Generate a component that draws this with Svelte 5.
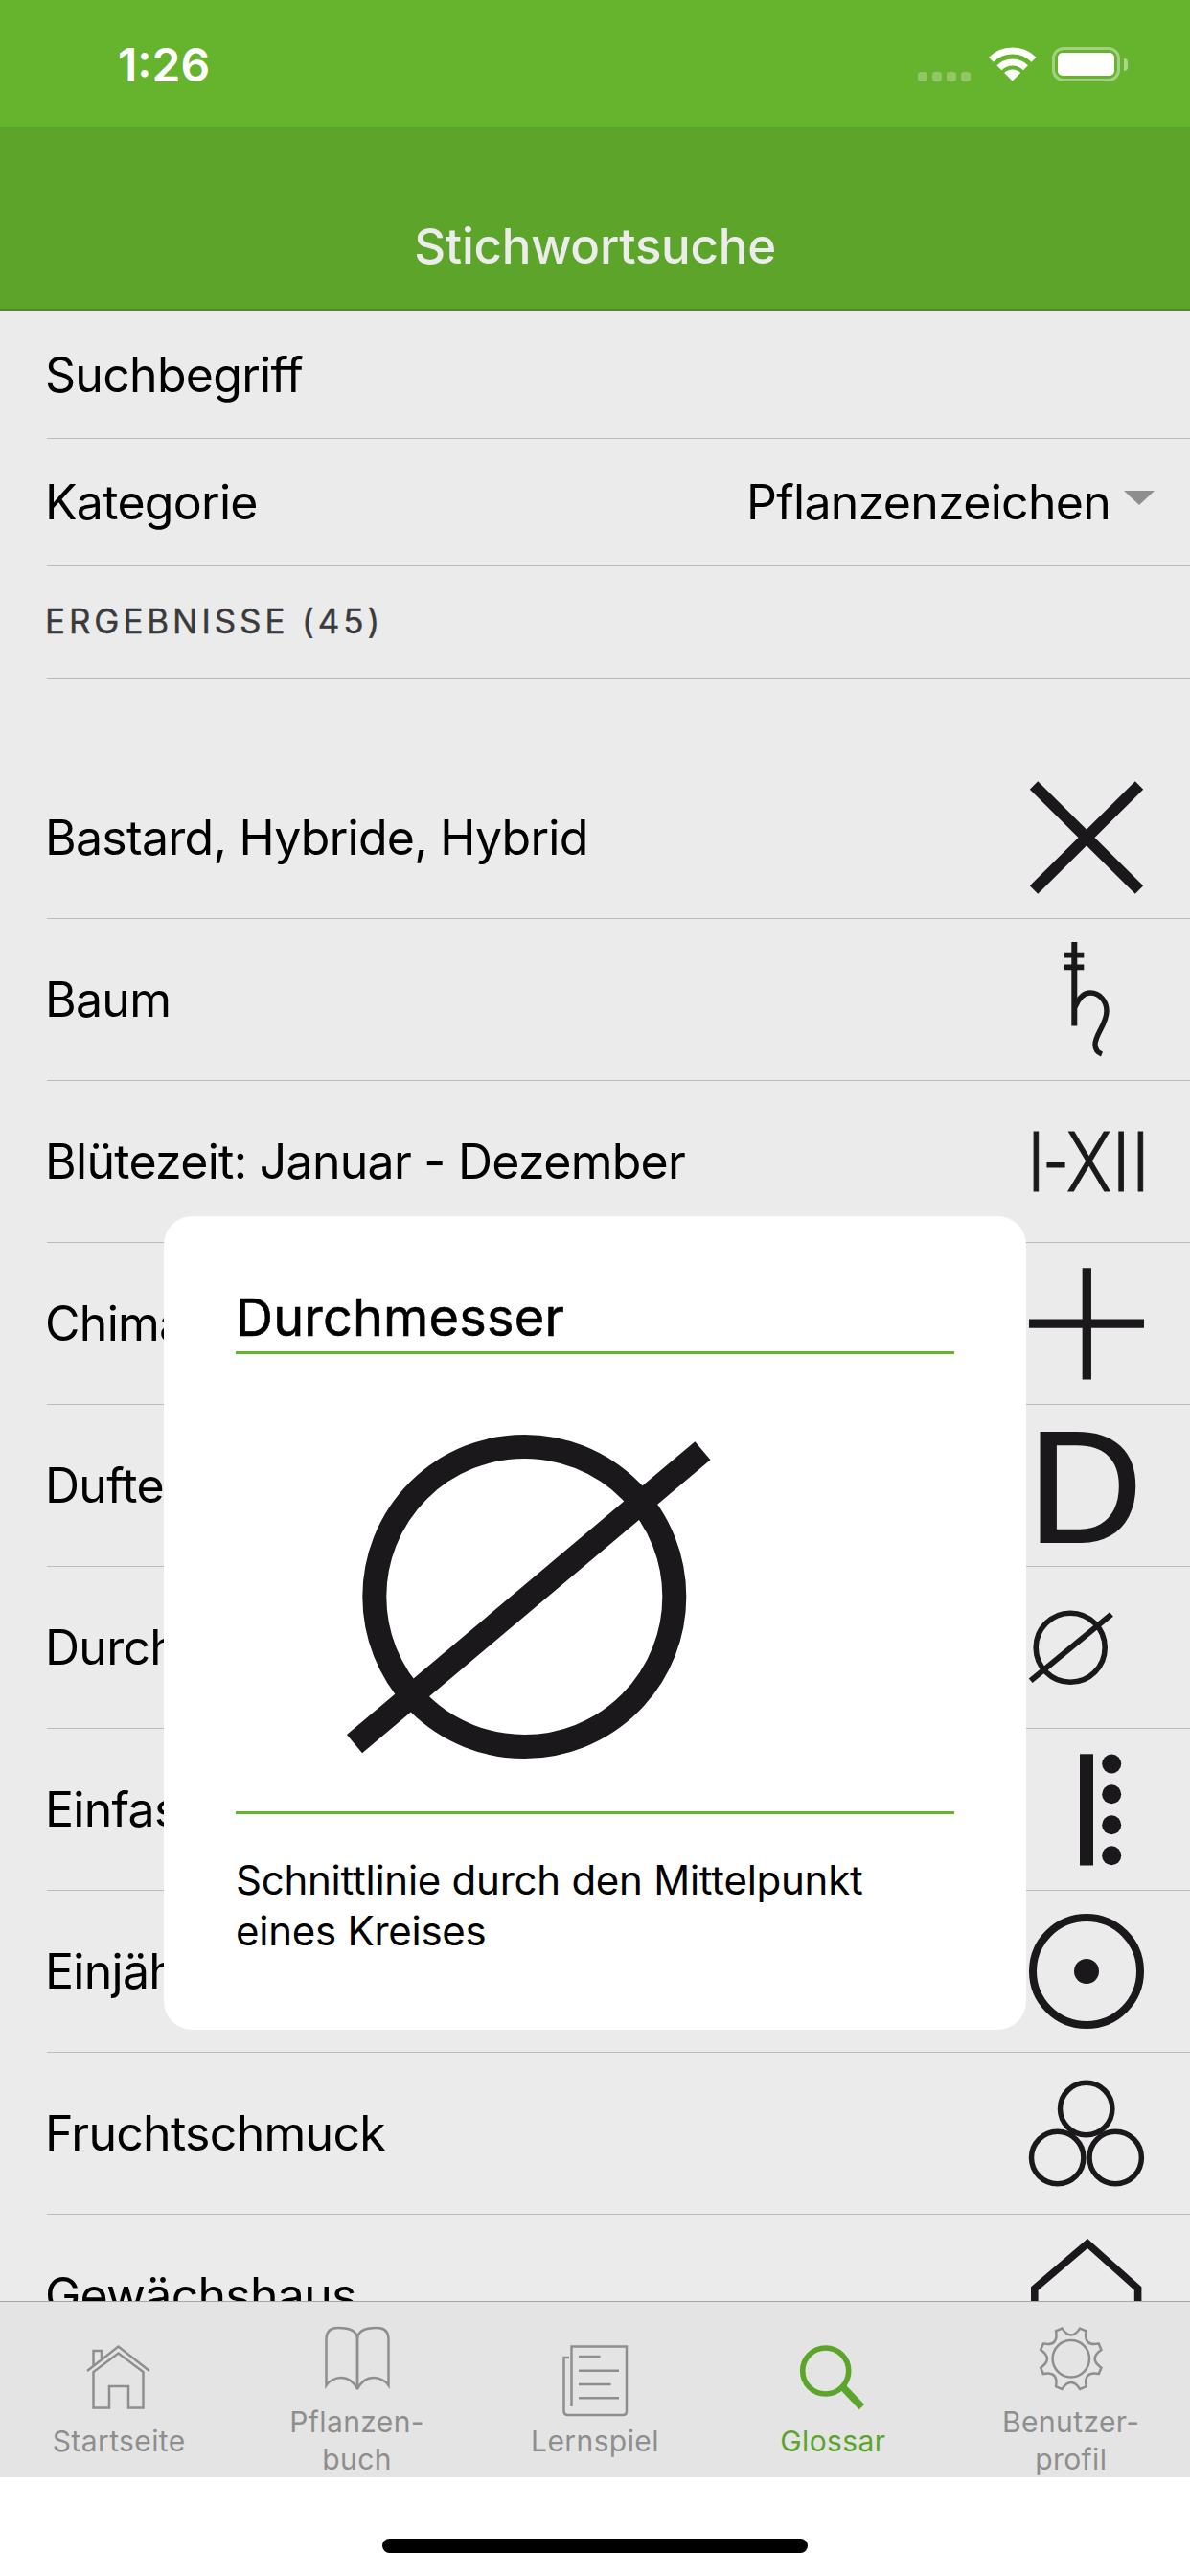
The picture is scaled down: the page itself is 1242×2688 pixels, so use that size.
<script>
  const rows = [
    { label: 'Bastard, Hybride, Hybrid', icon: 'cross' },
    { label: 'Baum', icon: 'tree' },
    { label: 'Blütezeit: Januar - Dezember', icon: 'months' },
    { label: 'Chimaere, Pfropfbastard', icon: 'plus' },
    { label: 'Duftende Pflanze', icon: 'd' },
    { label: 'Durchmesser', icon: 'dia' },
    { label: 'Einfassungspflanze', icon: 'edge' },
    { label: 'Einjährige Pflanze', icon: 'annual' },
    { label: 'Fruchtschmuck', icon: 'fruit' },
    { label: 'Gewächshaus', icon: 'house' }
  ];

  const cx = 33.8, cy = 34.3;
  const pt = (deg, r) => {
    const a = (deg * Math.PI) / 180;
    return `${(cx + r * Math.sin(a)).toFixed(2)} ${(cy - r * Math.cos(a)).toFixed(2)}`;
  };
  let gear = '';
  for (let i = 0; i < 8; i++) {
    const a = 22.5 + 45 * i;
    gear += `${i === 0 ? 'M' : 'L'}${pt(a - 6, 33)} L${pt(a + 6, 33)} Q${pt(a + 22.5, 18)} ${pt(a + 39, 33)} `;
  }
  gear += 'Z';
</script>

<div class="page">
  <div class="status">
    <span class="time">1:26</span>
    <div class="status-right">
      <div class="dots"><i></i><i></i><i></i><i></i></div>
      <svg class="wifi" width="50" height="36" viewBox="0 0 50 36" fill="none" stroke="#fff" stroke-width="7">
        <path d="M2.4 13.2A31.5 31.5 0 0 1 47 13.2" />
        <path d="M10.9 21.7A19.5 19.5 0 0 1 38.5 21.7" />
        <path d="M24.7 35.5L16.2 27A12 12 0 0 1 33.2 27Z" fill="#fff" stroke="none" />
      </svg>
      <div class="battery"><b></b></div>
      <div class="nub"></div>
    </div>
  </div>

  <header class="nav">Stichwortsuche</header>

  <div class="field first"><span>Suchbegriff</span></div>
  <div class="field second">
    <span>Kategorie</span>
    <div class="select"><span>Pflanzenzeichen</span><i class="caret"></i></div>
  </div>
  <div class="field results"><span>ERGEBNISSE (45)</span></div>

  <main class="list">
    {#each rows as row}
      <div class="row">
        <span>{row.label}</span>
        <svg class="sym" width="120" height="120" viewBox="0 0 120 120" fill="none" stroke="#1a181b">
          {#if row.icon === 'cross'}
            <path stroke-width="12" d="M5 5.5L115 114.5M115 5.5L5 114.5" />
          {:else if row.icon === 'tree'}
            <path stroke-width="6" d="M47.3 0V87.5" />
            <path stroke-width="5.8" d="M37 13.6H57.3M37 26.4H57.3" />
            <path stroke-width="5.4" d="M48 68C52 58 58 53 64 53C74 53 81 62 81 72C81 86 69 96 69 107C69 112 71 115 76 117" />
          {:else if row.icon === 'months'}
            <text class="roman" x="-3" y="91" textLength="129" lengthAdjust="spacingAndGlyphs" fill="#1a181b" stroke="#1a181b" stroke-width="1">I-XII</text>
          {:else if row.icon === 'plus'}
            <path stroke-width="9.3" d="M60.3 2.2V118.5M0 60.2H120" />
          {:else if row.icon === 'd'}
            <text class="dee" x="-1" y="119" fill="#1a181b" stroke="#1a181b" stroke-width="2">D</text>
          {:else if row.icon === 'dia'}
            <circle cx="43.2" cy="60.2" r="36" stroke-width="5.6" />
            <path stroke-width="6" d="M1.7 94.8L86 25.5" />
          {:else if row.icon === 'edge'}
            <g fill="#1a181b" stroke="none">
              <rect x="53" y="2.3" width="14" height="116.2" />
              <circle cx="86.2" cy="12.5" r="10" />
              <circle cx="86.2" cy="44.2" r="10" />
              <circle cx="86.2" cy="76.3" r="10" />
              <circle cx="86.2" cy="108.3" r="10" />
            </g>
          {:else if row.icon === 'annual'}
            <circle cx="60" cy="60" r="56" stroke-width="8" />
            <circle cx="60" cy="60" r="13" fill="#1a181b" stroke="none" />
          {:else if row.icon === 'fruit'}
            <g stroke-width="5.5">
              <circle cx="59.7" cy="34.5" r="27.2" />
              <circle cx="29.7" cy="85.5" r="27.2" />
              <circle cx="90.2" cy="85.5" r="27.2" />
            </g>
          {:else if row.icon === 'house'}
            <path stroke-width="7.6" d="M5.8 130V53L61 6L113.6 53V130" />
          {/if}
        </svg>
      </div>
    {/each}
  </main>

  <nav class="tabs">
    <div class="tab">
      <svg width="68" height="68" viewBox="0 0 68 68" fill="none" stroke="#8e8e8e" stroke-width="2.5">
        <path d="M1 27L33.5 1.5L66 27" />
        <path d="M7.5 65.5V28L33.5 8.5L59.5 28V65.5H44V43H24V65.5Z" />
        <path d="M7.5 21V6H16V14" />
      </svg>
      <span>Startseite</span>
    </div>
    <div class="tab">
      <svg width="68" height="68" viewBox="0 0 68 68" fill="none" stroke="#8e8e8e" stroke-width="2.5">
        <path d="M1.5 62V14C1.5 5 7 2 14 2C24 2 34 4 34 14V66C30 58 24 54 17 54C10 54 4 58 1.5 62Z" />
        <path d="M66.5 62V14C66.5 5 61 2 54 2C44 2 34 4 34 14V66C38 58 44 54 51 54C58 54 64 58 66.5 62Z" />
      </svg>
      <span>Pflanzen-<br />buch</span>
    </div>
    <div class="tab">
      <svg width="68" height="68" viewBox="0 0 68 74" fill="none" stroke="#8e8e8e" stroke-width="2.5" preserveAspectRatio="xMidYMin slice">
        <path d="M7 13H1.5V69Q1.5 73 6 73H63Q67 73 67 69V1.5H9.5V64" />
        <path d="M17 12H39.5M17 26.7H59M17 41H50.6M17 55.3H59" />
      </svg>
      <span>Lernspiel</span>
    </div>
    <div class="tab active">
      <svg width="68" height="68" viewBox="0 0 68 68" fill="none" stroke="#5ca42a">
        <circle cx="26.7" cy="27" r="24" stroke-width="5.6" />
        <path stroke-width="7.5" d="M45.4 44.7L64.4 64.7" />
      </svg>
      <span>Glossar</span>
    </div>
    <div class="tab">
      <svg width="68" height="68" viewBox="0 0 68 68" fill="none" stroke="#8e8e8e" stroke-width="2.5">
        <path d={gear} />
        <circle cx="33.8" cy="34.3" r="19.2" />
      </svg>
      <span>Benutzer-<br />profil</span>
    </div>
  </nav>

  <div class="home"><i></i></div>

  <section class="modal">
    <h2>Durchmesser</h2>
    <svg class="figure" width="750" height="477" viewBox="0 0 750 477" fill="none" stroke="#1a181b" stroke-width="25">
      <circle cx="301.3" cy="253" r="156.5" />
      <path d="M124 406.6L487.4 100.7" />
    </svg>
    <p>Schnittlinie durch den Mittelpunkt<br />eines Kreises</p>
  </section>
</div>

<style>
  :global(body) { margin: 0; background: #fff; }
  .page {
    position: relative;
    width: 1242px;
    height: 2688px;
    overflow: hidden;
    display: flex;
    flex-direction: column;
    background: #ebebeb;
    color: #000;
    font-family: Inter, "Liberation Sans", sans-serif;
  }
  .status {
    height: 132px;
    flex: none;
    box-sizing: border-box;
    background: #66b32e;
    color: #fff;
    display: flex;
    align-items: flex-start;
    justify-content: space-between;
    padding: 49px 65px 0 123px;
  }
  .time { font-size: 48px; font-weight: 600; line-height: 38px; }
  .status-right { display: flex; align-items: flex-start; }
  .dots { display: flex; gap: 5px; margin: 26px 19px 0 0; }
  .dots i { width: 10px; height: 10px; border-radius: 3px; background: rgba(255,255,255,.28); }
  .wifi { margin-right: 16px; }
  .battery {
    width: 71px; height: 36px; box-sizing: border-box;
    border: 3px solid rgba(255,255,255,.4);
    border-radius: 12px;
    padding: 3px;
  }
  .battery b { display: block; height: 100%; background: #fff; border-radius: 5px; }
  .nub { width: 4px; height: 13px; margin: 12px 0 0 4px; border-radius: 0 4px 4px 0; background: rgba(255,255,255,.45); }
  .nav {
    height: 192px;
    flex: none;
    box-sizing: border-box;
    background: #5ca42a;
    border-bottom: 2px solid #4f8a2a;
    color: #ececec;
    font-size: 51px;
    font-weight: 500;
    letter-spacing: -0.25px;
    text-align: center;
    padding-top: 95px;
    line-height: 60px;
  }
  .field {
    flex: none;
    box-sizing: border-box;
    margin-left: 49px;
    border-bottom: 1px solid #bcbcbc;
    display: flex;
    align-items: center;
    justify-content: space-between;
    font-size: 50px;
    letter-spacing: -0.72px;
    padding-right: 37px;
  }
  .field > span:first-child, .row > span { margin-left: -2px; }
  .first { height: 134px; }
  .second { height: 133px; }
  .select { display: flex; align-items: center; gap: 14px; }
  .caret {
    width: 0; height: 0;
    border-left: 16px solid transparent;
    border-right: 16px solid transparent;
    border-top: 15px solid #8e8e8e;
    margin-top: -10px;
  }
  .results {
    height: 118px;
    font-size: 35px;
    font-weight: 400;
    -webkit-text-stroke: 0.4px #3a3a3c;
    letter-spacing: 3.9px;
    color: #3a3a3c;
    padding-bottom: 3px;
  }
  .list {
    flex: 1;
    min-height: 0;
    overflow: hidden;
    padding-top: 81px;
  }
  .row {
    height: 169px;
    box-sizing: border-box;
    margin-left: 49px;
    padding-right: 48px;
    border-bottom: 1px solid #bcbcbc;
    display: flex;
    align-items: center;
    justify-content: space-between;
    font-size: 50px;
    letter-spacing: -0.72px;
  }
  .sym { flex: none; overflow: visible; }
  .roman { font-family: Roboto, sans-serif; font-weight: 300; font-size: 87px; }
  .dee { font-family: "Liberation Sans", sans-serif; font-size: 165px; }
  .tabs {
    flex: none;
    height: 184px;
    box-sizing: border-box;
    background: #e4e4e4;
    border-top: 1px solid #a5a5a5;
    display: grid;
    grid-template-columns: repeat(5, 1fr);
    position: relative;
  }
  .tab {
    display: flex;
    flex-direction: column;
    align-items: center;
    justify-content: center;
    padding-top: 26px;
    gap: 13px;
    box-sizing: border-box;
    color: #8e8e8e;
    font-size: 30px;
    line-height: 39px;
    letter-spacing: 0.4px;
    text-align: center;
    overflow: hidden;
  }
  .tab svg { flex: none; overflow: visible; }
  .tab.active { color: #5ca42a; }
  .home {
    flex: none;
    height: 103px;
    background: #fff;
    display: flex;
    justify-content: center;
    padding-top: 64px;
    box-sizing: border-box;
  }
  .home i { width: 444px; height: 15px; border-radius: 8px; background: #000; }
  .modal {
    position: absolute;
    left: 171px;
    top: 1269px;
    width: 900px;
    height: 849px;
    box-sizing: border-box;
    background: #fff;
    border-radius: 30px;
    padding: 74px 75px 0;
  }
  h2 {
    margin: 0;
    font-size: 54px;
    font-weight: 400;
    -webkit-text-stroke: 0.6px #000;
    letter-spacing: 0.2px;
    line-height: 64px;
    padding-bottom: 3px;
    border-bottom: 3px solid #66b32e;
  }
  .figure { display: block; border-bottom: 3px solid #66b32e; box-sizing: content-box; }
  p {
    margin: 0;
    padding-top: 42px;
    font-size: 42px;
    letter-spacing: -0.25px;
    line-height: 53px;
  }
</style>
